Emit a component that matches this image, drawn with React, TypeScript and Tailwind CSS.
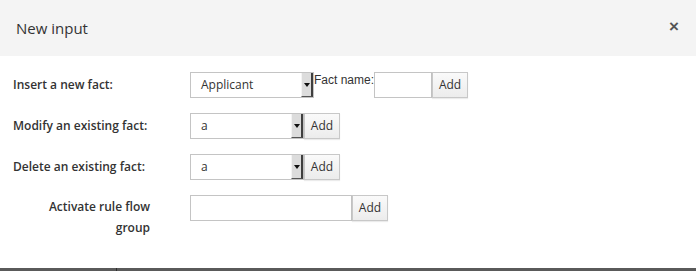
import React from 'react';

const sans = "font-['Open_Sans',_'Liberation_Sans',_sans-serif]";

function FakeSelect({ value, width }: { value: string; width: string }) {
  return (
    <div className={`flex h-[26px] ${width} border border-[#c4c4c4] bg-white`}>
      <div className="flex flex-1 items-center pl-[10px] text-[12px] text-[#333]">{value}</div>
      <div className="relative w-[12px] border-l border-l-[#f4f4f4] border-r-2 border-r-[#3f3f3f] border-b border-b-[#555] bg-[#dcdcdc]">
        <span className="absolute left-[2px] top-[10px] h-0 w-0 border-x-[3px] border-t-[4px] border-x-transparent border-t-[#111]" />
      </div>
    </div>
  );
}

function AddButton() {
  return (
    <button className="h-[26px] w-[36px] border border-[#c8c8c8] bg-gradient-to-b from-[#fafafa] to-[#ececec] text-[12px] text-[#333] shadow-[0_1px_1px_rgba(0,0,0,0.08)]">
      Add
    </button>
  );
}

export default function App() {
  return (
    <div className={`flex h-[271px] w-[696px] flex-col bg-white ${sans}`}>
      {/* Header */}
      <div className="flex h-[56px] items-center justify-between bg-[#f4f4f4] pl-4 pr-[17px]">
        <h4 className="text-[15px] text-[#333]">New input</h4>
        <span className="-mt-[3px] font-['Liberation_Sans',_sans-serif] text-[17px] font-bold leading-none text-[#555]">×</span>
      </div>

      {/* Body */}
      <div className="flex flex-1 flex-col gap-[15px] pt-4 text-[12px] text-[#333]">
        <div className="flex items-start">
          <label className="flex h-[26px] w-[190px] items-center pl-[13px] font-semibold">Insert a new fact:</label>
          <FakeSelect value="Applicant" width="w-[124px]" />
          <span className="font-['Liberation_Sans',_sans-serif] text-[12px] leading-[17px] text-[#333]">Fact name:</span>
          <input className="h-[26px] w-[58px] border border-[#c4c4c4] bg-white" />
          <AddButton />
        </div>

        <div className="flex items-start">
          <label className="flex h-[26px] w-[190px] items-center pl-[13px] font-semibold">Modify an existing fact:</label>
          <FakeSelect value="a" width="w-[114px]" />
          <AddButton />
        </div>

        <div className="flex items-start">
          <label className="flex h-[26px] w-[190px] items-center pl-[13px] font-semibold">Delete an existing fact:</label>
          <FakeSelect value="a" width="w-[114px]" />
          <AddButton />
        </div>

        <div className="flex items-start">
          <label className="w-[190px] pr-[40px] pt-[1px] text-right font-semibold leading-[21px]">
            Activate rule flow
            <br />
            group
          </label>
          <input className="h-[26px] w-[162px] border border-[#c4c4c4] bg-white" />
          <AddButton />
        </div>
      </div>

      {/* bottom strip */}
      <div className="flex h-[3px] bg-[#5a5a5a]">
        <div className="w-[116px]" />
        <div className="w-px bg-[#2e2e2e]" />
      </div>
    </div>
  );
}
